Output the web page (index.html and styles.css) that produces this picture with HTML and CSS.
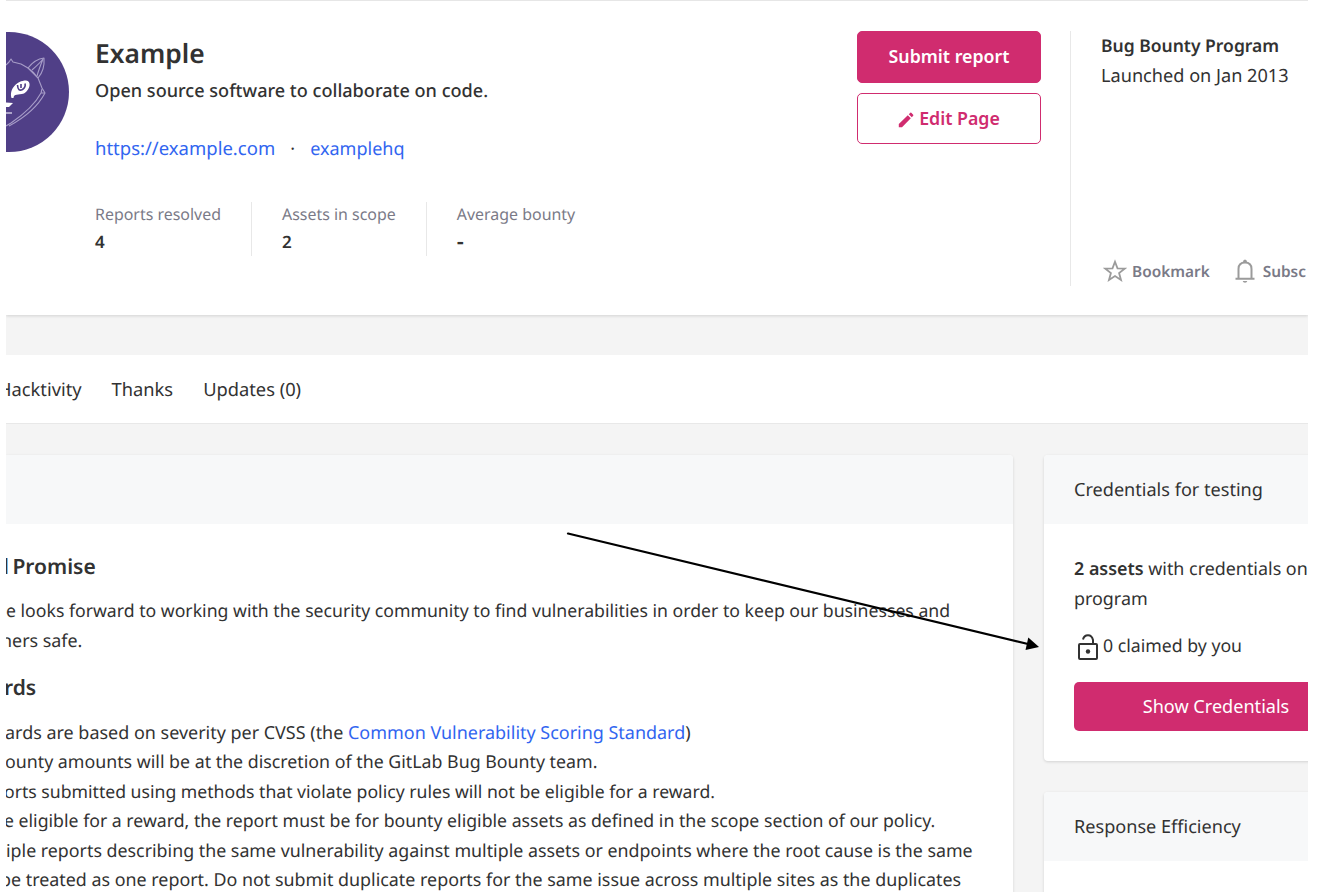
FILE: index.html
```
<!DOCTYPE html>
<html lang="en">
<head>
<meta charset="utf-8">
<title>Example - Bug Bounty Program</title>
<link rel="stylesheet" href="styles.css">
</head>
<body>
<div class="page">
  <header class="profile">
    <svg class="avatar" viewBox="0 0 120 120" width="120" height="120">
      <circle cx="60" cy="60" r="60" fill="#503f87"/>
      <g fill="none" stroke="#a79dc8" stroke-width="1.1" stroke-linejoin="round">
        <path d="M57 33 L60 30 L62 27 L64 30 L72 32 L79 36"/>
        <path d="M79 36 Q86 27 95 26 Q96 38 89 46 L79 36 Q85 40 89 46 L93 56 L96 61 Q86 80 60 94"/>
        <path d="M83 38 Q91 31 94 27 Q90 37 88 44"/>
        <path d="M93 57 L92 61 Q84 76 62 91 L57 94 M92 61 L96 61"/>
      </g>
      <path fill="#fff" d="M62.500 66C60 57 68 48.500 77 48.500 83 49 81 58 75 61.500 69 63.500 65 61 64.500 66Z M57 70.500 L64 71 L60 75 L57 75Z"/>
      <path fill="none" stroke="#503f87" stroke-width="1.6" d="M68.500 53 Q69 60 73.500 57.500 Q77 55 76 51.500 M72 52 L72 56"/>
      <path fill="none" stroke="#d5cfe6" stroke-width="1.4" d="M56 81 L63 81"/>
    </svg>
    <div class="intro">
      <h1 class="name">Example</h1>
      <p class="tagline">Open source software to collaborate on code.</p>
      <p class="links"><a class="site">https://example.com</a><span class="dot">·</span><a>examplehq</a></p>
      <dl class="stats">
        <div class="stat"><dt>Reports resolved</dt><dd>4</dd></div>
        <div class="stat"><dt>Assets in scope</dt><dd>2</dd></div>
        <div class="stat"><dt>Average bounty</dt><dd class="none">-</dd></div>
      </dl>
    </div>
    <div class="actions">
      <button class="btn primary">Submit report</button>
      <button class="btn outline">
        <svg class="pencil" viewBox="0 0 16 16" width="16" height="16"><path fill="#d02c6f" d="M.8 15.2V12L9.8 3.2 12.8 6.2 4 15.2ZM10.8 2.3 12.3.8Q12.8.4 13.3.8L15.2 2.7Q15.6 3.2 15.2 3.7L13.8 5.2Z"/></svg>
        Edit Page
      </button>
    </div>
    <aside class="program">
      <div>
        <p class="program-title">Bug Bounty Program</p>
        <p class="launched">Launched on Jan 2013</p>
      </div>
      <div class="follow">
        <svg viewBox="0 0 24 24" width="24" height="24"><path fill="none" stroke="#9b9b9b" stroke-width="1.8" d="M12 2.8 14.5 9.3 21.7 9.6 16.1 14 18 21 12 17.1 6 21 7.900 14 2.300 9.600 9.500 9.300Z"/></svg>
        <span class="bookmark">Bookmark</span>
        <svg viewBox="0 0 22 26" width="22" height="26"><path fill="none" stroke="#9b9b9b" stroke-width="2" d="M1.500 20.700H20.500M4.500 20V11Q4.500 4.500 11 4.500T17.500 11V20"/><path fill="#9b9b9b" d="M9 4Q9 1.500 11 1.500T13 4ZM8.700 23H13.300Q13 24.800 11 24.800T8.700 23Z"/></svg>
        <span>Subsc</span>
      </div>
    </aside>
  </header>

  <nav class="tabs"><a class="hack">Hacktivity</a><a>Thanks</a><a>Updates (0)</a></nav>

  <main class="columns">
    <section class="card policy">
      <div class="card-head"></div>
      <div class="policy-body">
        <h2 class="promise">l Promise</h2>
        <p class="l1">e looks forward to working with the security community to find vulnerabilities in order to keep our businesses and</p>
        <p class="l2">hers safe.</p>
        <h2 class="rewards">rds</h2>
        <p class="l3">ards are based on severity per CVSS (the <a>Common Vulnerability Scoring Standard</a>)</p>
        <p class="l4">ounty amounts will be at the discretion of the GitLab Bug Bounty team.</p>
        <p class="l5">orts submitted using methods that violate policy rules will not be eligible for a reward.</p>
        <p class="l6">e eligible for a reward, the report must be for bounty eligible assets as defined in the scope section of our policy.</p>
        <p class="l7">iple reports describing the same vulnerability against multiple assets or endpoints where the root cause is the same</p>
        <p class="l8">be treated as one report. Do not submit duplicate reports for the same issue across multiple sites as the duplicates</p>
      </div>
    </section>
    <div class="side">
      <section class="card">
        <h3 class="card-head">Credentials for testing</h3>
        <div class="cred-body">
          <p class="assets"><b>2 assets</b> with credentials on<br>program</p>
          <p class="claimed">
            <svg viewBox="0 0 20 26" width="20" height="26"><g fill="none" stroke="#323232" stroke-width="2"><rect x="1" y="10" width="18" height="15" rx="1"/><path d="M5 5.500Q6 1.200 10 1.200T15 6V10"/></g><circle cx="10" cy="17.500" r="2.200" fill="#323232"/></svg>
            <span>0 claimed by you</span>
          </p>
          <button class="show">Show Credentials</button>
        </div>
      </section>
      <section class="card next"><h3 class="card-head">Response Efficiency</h3></section>
    </div>
  </main>

  <svg class="arrow" viewBox="0 0 480 124" width="480" height="124"><path d="M6 4.500 466 115" stroke="#000" stroke-width="2.200" stroke-linecap="round"/><path d="M477 118 463.500 121 466.300 108.500Z"/></svg>
</div>
</body>
</html>
```
FILE: styles.css
```
* { box-sizing: border-box; }
body {
  margin: 0;
  background: #fff;
  color: #323232;
  font: 17.8px/29.5px "Noto Sans", sans-serif;
  text-rendering: geometricPrecision;
  white-space: nowrap;
}
h1, h2, h3, p, dl, dd { margin: 0; }
a { color: #3165f0; }
svg { display: block; flex: none; }
button { font: inherit; }

.page {
  position: relative;
  width: 1302px;
  height: 892px;
  margin-left: 6px;
  overflow: hidden;
  background: #f4f4f4;
}

.profile {
  display: flex;
  align-items: flex-start;
  height: 315px;
  padding-top: 30px;
  border-top: 1px solid #e6e6e6;
  background: #fff;
  box-shadow: 0 1px 3px rgba(0, 0, 0, .14);
}
.avatar { margin: 1px 26px 0 -57px; }
.intro { flex: none; width: 762px; }
.name { font-size: 26.4px; font-weight: 600; line-height: 36px; margin-top: 4px; }
.tagline { font-size: 18.1px; font-weight: 500; line-height: 30px; margin-top: 5px; }
.links { font-size: 18px; line-height: 30px; margin-top: 28px; }
.site { font-size: 18.5px; }
.dot { display: inline-block; width: 35px; text-align: center; }
.stats { display: flex; margin-top: 38px; }
.stat { height: 54px; padding: 0 30px; border-left: 1px solid #e8e8e8; }
.stat:first-child { padding-left: 0; border-left: 0; }
.stat dt { font-size: 15.95px; line-height: 25px; color: #7a7a87; }
.stat dd { font-size: 17px; font-weight: 600; line-height: 29px; }
.stat .none { font-size: 22px; }

.actions { display: flex; flex: none; flex-direction: column; gap: 10px; width: 184px; }
.btn {
  display: flex;
  align-items: center;
  justify-content: center;
  gap: 5px;
  height: 51.5px;
  padding: 0;
  border: 1px solid #d02c6f;
  border-radius: 5px;
  font-size: 17.75px;
  font-weight: 600;
}
.primary { background: #d02c6f; color: #fff; }
.outline { background: #fff; color: #d02c6f; }
.pencil { margin-top: 3px; }
.program {
  display: flex;
  flex: none;
  flex-direction: column;
  justify-content: space-between;
  height: 255px;
  margin-left: 29px;
  padding-left: 30px;
  border-left: 1px solid #e8e8e8;
}
.program-title { font-size: 17.5px; font-weight: 600; margin-top: 1px; }
.launched { font-size: 18.15px; }
.follow {
  display: flex;
  align-items: center;
  margin-left: 2px;
  color: #7a7a87;
  font-size: 15.4px;
  font-weight: 600;
}
.follow span { margin-left: 7px; }
.follow .bookmark { margin: 0 24px 0 5px; }

.tabs {
  display: flex;
  gap: 30px;
  height: 69px;
  margin-top: 40px;
  margin-bottom: 31px;
  background: #fff;
  font-size: 18.3px;
  line-height: 70px;
  border-bottom: 1px solid #e8e8e8;
}
.tabs a { color: #323232; }
.tabs .hack { margin-left: -8px; }

.columns { display: flex; gap: 31px; }
.card {
  background: #fff;
  border-radius: 4px;
  overflow: hidden;
  box-shadow: 0 1px 3px rgba(0, 0, 0, .14);
}
.card-head {
  height: 69px;
  padding-left: 30px;
  background: #f7f8f9;
  font-size: 18.1px;
  font-weight: 400;
  line-height: 70px;
}
.policy { flex: none; width: 1007px; height: 460px; border-radius: 0 4px 4px 0; }
.policy-body { padding-top: 28px; }
.policy h2 { font-size: 21px; font-weight: 600; line-height: 30px; }
.promise { margin: 0 0 15px -3px; word-spacing: -2px; }
.rewards { margin: 17px 0 15.5px -2px; }
.l1 { font-size: 17.66px; }
.l2 { font-size: 17.9px; margin-left: -5px; }
.l3 { font-size: 17.97px; margin-left: -1px; }
.l4 { font-size: 17.79px; margin-left: -1px; }
.l5 { font-size: 17.64px; margin-left: -2px; }
.l6 { font-size: 17.7px; margin-left: -2px; }
.l7 { font-size: 17.82px; }
.l8 { font-size: 17.89px; margin-left: -6px; }

.side { width: 300px; flex: none; }
.next { height: 120px; margin-top: 31px; }
.cred-body { padding: 31px 0 30px 30px; }
.assets { font-size: 17.9px; }
.assets b { font-weight: 600; }
.claimed {
  display: flex;
  align-items: center;
  gap: 5px;
  height: 30px;
  margin: 18px 0 20px 4px;
  font-size: 17.7px;
}
.show {
  display: block;
  width: 284px;
  height: 49px;
  border: 0;
  border-radius: 5px;
  background: #d02c6f;
  color: #fff;
  font-size: 18.1px;
}

/* pointer drawn over the cards */
.arrow { position: absolute; left: 556px; top: 529px; }
```
